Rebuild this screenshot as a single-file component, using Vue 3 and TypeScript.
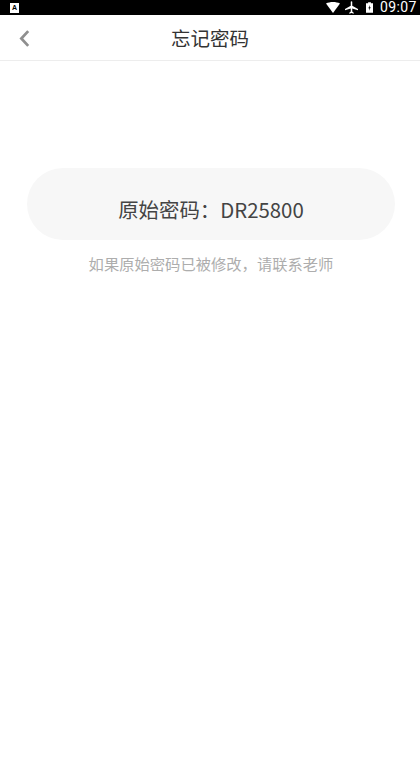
<script setup lang="ts">
const title = '忘记密码'
const password = 'DR25800'
</script>

<template>
  <div class="page">
    <div class="status">
      <span class="notice">A</span>
      <div class="status-right">
        <svg class="ic-wifi" viewBox="0 0 14 11"><path d="M0 1.5C4 -.5 10 -.5 14 1.5L7 11Z" fill="#fff" /></svg>
        <svg class="ic-plane" viewBox="0 0 14 14"><path d="M6.2 0.8C6.2 0 7.8 0 7.8 0.8V5L14 8.6V10L7.8 8.2V11.4L9.4 12.6V13.6L7 13L4.6 13.6V12.6L6.2 11.4V8.2L0 10V8.6L6.2 5Z" fill="#fff" /></svg>
        <svg class="ic-batt" viewBox="0 0 8 12"><path d="M2.4 0H5.6V1H8V12H0V1H2.4Z" fill="#fff" /><path d="M4.6 3L2.6 6.8H3.8L3.4 9.6L5.4 5.6H4.2Z" fill="#000" /></svg>
        <span class="time">09:07</span>
      </div>
    </div>
    <header class="nav">
      <button class="back" aria-label="返回">
        <svg viewBox="0 0 12 18"><path d="M9.5 2L3 9L9.5 16" fill="none" stroke="#8f8f8f" stroke-width="2.6" /></svg>
      </button>
      <h1 class="title">{{ title }}</h1>
    </header>
    <main class="content">
      <div class="pill">原始密码：{{ password }}</div>
      <p class="hint">如果原始密码已被修改，请联系老师</p>
    </main>
  </div>
</template>

<style scoped>
.page {
  width: 420px;
  height: 757px;
  overflow: hidden;
  background: #fff;
  font-family: "Noto Sans CJK SC", "Noto Sans", sans-serif;
  display: flex;
  flex-direction: column;
}
.status {
  height: 15px;
  flex: none;
  background: #000;
  display: flex;
  align-items: center;
  justify-content: space-between;
  padding: 0 0 0 10px;
}
.notice {
  width: 9px;
  height: 10px;
  background: #fff;
  color: #000;
  font: bold 7px/10px "Liberation Sans", sans-serif;
  text-align: center;
}
.status-right {
  display: flex;
  align-items: center;
}
.ic-wifi { width: 14px; height: 11px; margin-right: 5px; }
.ic-plane { width: 13px; height: 13px; margin-right: 8px; }
.ic-batt { width: 7px; height: 11px; margin-right: 7px; }
.time {
  color: #fff;
  font: 14px/15px Roboto, sans-serif;
  letter-spacing: 0.4px;
  white-space: nowrap;
  width: 40px;
}
.nav {
  height: 46px;
  flex: none;
  box-sizing: border-box;
  position: relative;
  display: flex;
  align-items: center;
  justify-content: center;
  border-bottom: 1px solid #ededed;
}
.back {
  position: absolute;
  left: 18px;
  top: 14px;
  width: 13px;
  height: 19px;
  padding: 0;
  border: 0;
  background: none;
}
.back svg { display: block; width: 13px; height: 19px; }
.title {
  margin: 0;
  font-size: 19.5px;
  font-weight: 400;
  line-height: 28px;
  color: #333;
}
.content {
  flex: 1;
  padding: 107px 25px 0 27px;
  background: #fff;
}
.pill {
  height: 72px;
  border-radius: 36px;
  background: #f7f7f7;
  color: #444;
  font-size: 20.4px;
  line-height: 28px;
  display: flex;
  align-items: center;
  justify-content: center;
  padding-top: 10px;
  box-sizing: border-box;
}
.hint {
  margin: 12px 0 0;
  text-align: center;
  font-size: 15.3px;
  line-height: 22px;
  color: #adadad;
}
</style>
